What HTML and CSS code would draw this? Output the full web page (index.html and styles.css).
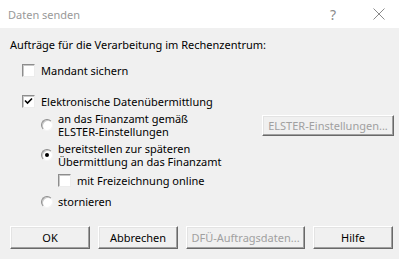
FILE: index.html
```html
<!DOCTYPE html>
<html lang="de">
<head>
<meta charset="utf-8">
<title>Daten senden</title>
<link rel="stylesheet" href="styles.css">
</head>
<body>
<div class="dialog">
  <div class="titlebar">
    <span class="title">Daten senden</span>
    <span class="help">?</span>
    <span class="close"><svg width="12" height="12" viewBox="0 0 12 12"><path d="M0.5 0.5 L11.5 11.5 M11.5 0.5 L0.5 11.5" stroke="#8a8a8a" stroke-width="1" fill="none"/></svg></span>
  </div>
  <div class="content">
    <p class="heading">Aufträge für die Verarbeitung im Rechenzentrum:</p>
    <label class="check mandant"><span class="box"></span><span class="lbl">Mandant sichern</span></label>
    <label class="check edu"><span class="box"><svg width="9" height="9" viewBox="0 0 9 9"><path d="M1 3.5 L3.5 6 L8 1.5" stroke="#000" stroke-width="1.6" fill="none"/></svg></span><span class="lbl">Elektronische Datenübermittlung</span></label>
    <div class="group">
      <div class="row r1">
        <label class="radio"><span class="circle"></span><span class="lbl">an das Finanzamt gemäß<br>ELSTER-Einstellungen</span></label>
        <button class="btn disabled elster" type="button">ELSTER-Einstellungen...</button>
      </div>
      <label class="radio r2"><span class="circle"><span class="dot"></span></span><span class="lbl">bereitstellen zur späteren<br>Übermittlung an das Finanzamt</span></label>
      <label class="check sub"><span class="box"></span><span class="lbl">mit Freizeichnung online</span></label>
      <label class="radio r3"><span class="circle"></span><span class="lbl">stornieren</span></label>
    </div>
    <div class="buttons">
      <button class="btn" type="button">OK</button>
      <button class="btn" type="button">Abbrechen</button>
      <button class="btn disabled dfue" type="button">DFÜ-Auftragsdaten...</button>
      <button class="btn" type="button">Hilfe</button>
    </div>
  </div>
</div>
</body>
</html>
```
FILE: styles.css
```css
html, body {
  margin: 0;
  padding: 0;
}
body {
  width: 399px;
  height: 259px;
  background: #f0f0f0;
  font-family: "Noto Sans", "Open Sans", sans-serif;
  font-size: 11px;
  line-height: 13px;
  color: #000;
  overflow: hidden;
}
.dialog {
  width: 399px;
  height: 259px;
}
.titlebar {
  height: 28px;
  background: #fff;
  display: flex;
  align-items: center;
  padding-left: 8px;
  font-size: 11px;
  color: #999;
}
.title {
  flex: 1;
}
.help {
  width: 12px;
  text-align: center;
  font-size: 14px;
  color: #8a8a8a;
  margin-right: 34px;
}
.close {
  display: flex;
  width: 12px;
  height: 12px;
  margin-right: 14px;
}
.content {
  padding: 10px 5px 0 10px;
}
.heading {
  margin: 0;
}
.check, .radio {
  display: flex;
  align-items: center;
}
.box {
  box-sizing: border-box;
  width: 13px;
  height: 13px;
  background: #fff;
  border-style: solid;
  border-width: 1px;
  border-color: #8d8d8d #ececec #ececec #8d8d8d;
  box-shadow: inset 1px 1px 0 #c8c8c8;
  display: flex;
  align-items: center;
  justify-content: center;
  flex: none;
}
.check .lbl {
  margin-left: 6px;
}
.mandant {
  margin: 13px 0 0 12px;
}
.edu {
  margin: 18px 0 0 12px;
}
.group {
  margin-left: 31px;
}
.row {
  display: flex;
  align-items: center;
}
.r1 {
  margin-top: 4px;
}
.circle {
  box-sizing: border-box;
  width: 12px;
  height: 12px;
  border-radius: 50%;
  background: #fff;
  border: 1px solid;
  border-color: #8d8d8d #f4f4f4 #f4f4f4 #8d8d8d;
  box-shadow: inset 1px 1px 0 #c8c8c8;
  display: flex;
  align-items: center;
  justify-content: center;
  flex: none;
}
.dot {
  width: 4px;
  height: 4px;
  border-radius: 50%;
  background: #000;
}
.radio .lbl {
  margin-left: 5px;
}
.r2 {
  margin-top: 4px;
}
.sub {
  margin: 6px 0 0 17px;
}
.r3 {
  margin-top: 8px;
}
.btn {
  box-sizing: border-box;
  height: 23px;
  width: 80px;
  padding: 0;
  margin: 0;
  font-family: inherit;
  font-size: 11px;
  color: #000;
  background: #f0f0f0;
  border: 1px solid;
  border-color: #fff #696969 #696969 #fff;
  box-shadow: inset -1px -1px 0 #a0a0a0, inset 1px 1px 0 #e3e3e3;
  border-radius: 0;
  white-space: nowrap;
}
.btn.disabled {
  color: #a0a0a0;
}
.elster {
  margin-left: auto;
  width: 132px;
  height: 21px;
}
.buttons {
  display: flex;
  gap: 8px;
  margin-top: 18px;
}
.dfue {
  width: 119px;
}
```
